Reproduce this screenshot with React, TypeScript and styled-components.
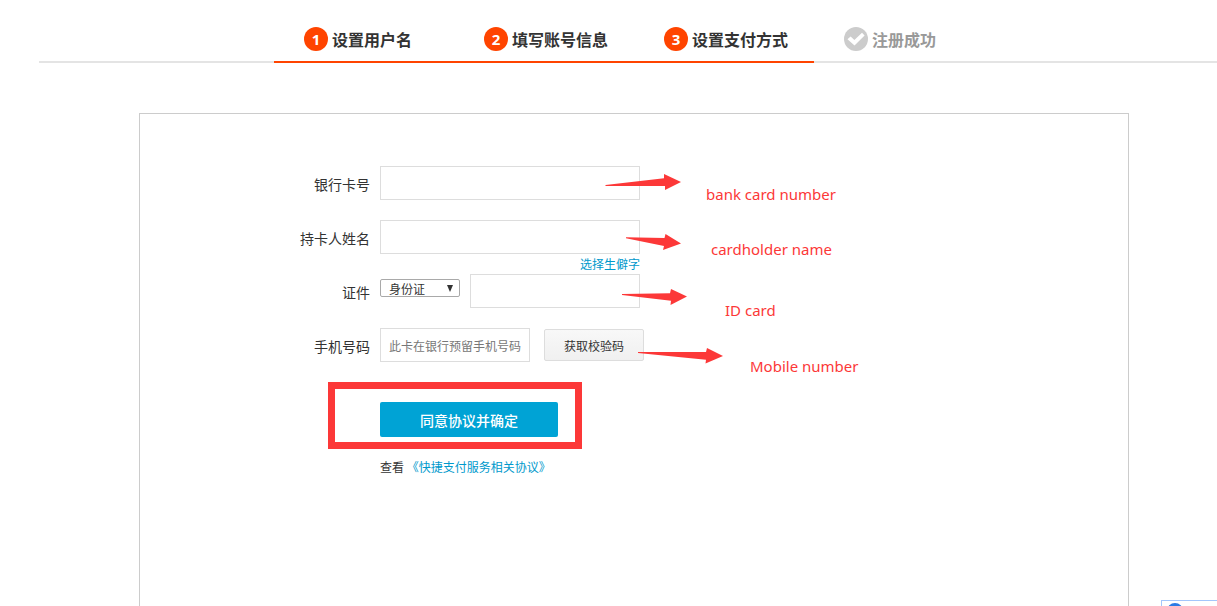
import React from "react";
import styled, { createGlobalStyle } from "styled-components";

const GlobalStyle = createGlobalStyle`
  * { box-sizing: border-box; }
  body {
    margin: 0;
    overflow-x: hidden;
    background: #fff;
    color: #333;
    font: 14px/20px "Noto Sans CJK SC", sans-serif;
  }
  input, select, button { font-family: inherit; color: inherit; margin: 0; }
  a { color: #0099cc; text-decoration: none; }
`;

const Page = styled.div`
  display: flex;
  flex-direction: column;
  min-width: 1190px;
  min-height: 100vh;
  margin-left: 39px;
  margin-right: -12px;
`;

const StepBar = styled.header`
  display: flex;
  justify-content: center;
  background: linear-gradient(#e4e4e4, #e4e4e4) bottom / 100% 2px no-repeat;
`;

const Steps = styled.ol`
  display: flex;
  margin: 0;
  padding: 0;
  list-style: none;
`;

const Step = styled.li<{ $done?: boolean }>`
  display: flex;
  align-items: center;
  gap: 4px;
  width: 180px;
  height: 63px;
  padding: 16px 0 0 30px;
  border-bottom: 2px solid ${(p) => (p.$done ? "#ff4400" : "#e4e4e4")};
  color: ${(p) => (p.$done ? "#333" : "#999")};
  font-size: 16px;
  font-weight: bold;
  line-height: 24px;
`;

const StepNumber = styled.span`
  width: 24px;
  height: 24px;
  border-radius: 50%;
  background: #ff4400;
  color: #fff;
  font: bold 15px/24px "Open Sans", sans-serif;
  text-align: center;
`;

const Panel = styled.main`
  flex: 1;
  width: 990px;
  margin: 50px auto 0;
  padding: 52px 0 40px;
  border: 1px solid #ccc;
  border-bottom: 0;
`;

const Row = styled.div`
  position: relative;
  display: flex;
  gap: 10px;
  height: 34px;
  margin-bottom: 20px;
`;

const Label = styled.label`
  width: 230px;
  padding-top: 8px;
  text-align: right;
`;

const Field = styled.input<{ $width: number }>`
  flex-shrink: 0;
  width: ${(p) => p.$width}px;
  height: 34px;
  padding: 0 8px;
  border: 1px solid #ddd;
  background: #fff;
  font-size: 12px;
  &::placeholder { color: #777; }
`;

const FieldStack = styled.div`
  display: flex;
  flex-direction: column;
  align-items: flex-end;
`;

const HintLink = styled.a`
  font-size: 12px;
  line-height: 20px;
`;

const SelectBox = styled.div`
  position: relative;
  padding-top: 5px;
`;

const Select = styled.select`
  display: block;
  width: 80px;
  height: 18px;
  padding: 0 8px;
  appearance: none;
  border: 1px solid #a9a9a9;
  border-radius: 2px;
  background: #fff;
  font-size: 12px;
  line-height: 18px;
`;

const Caret = styled.svg`
  position: absolute;
  top: 11px;
  right: 7px;
  pointer-events: none;
`;

const PhoneFields = styled.div`
  display: flex;
  align-items: center;
  gap: 14px;
`;

const CodeButton = styled.button`
  width: 100px;
  height: 32px;
  padding: 0;
  border: 1px solid #ddd;
  border-radius: 2px;
  background: linear-gradient(#f8f8f8, #f0f0f0);
  font-size: 12px;
`;

const Actions = styled.div`
  display: flex;
  flex-direction: column;
  align-items: flex-start;
  gap: 20px;
  padding-left: 240px;
`;

const SubmitBox = styled.div`
  position: relative;
`;

const SubmitButton = styled.button`
  display: block;
  width: 178px;
  height: 35px;
  margin-top: 20px;
  padding: 0;
  border: 0;
  border-radius: 2px;
  background: #00a3d5;
  && { color: #fff; }
  font-size: 14px;
  font-weight: 500;
`;

const Highlight = styled.div`
  position: absolute;
  inset: 0 -24px -12px -52px;
  border: 7px solid #fc3838;
  pointer-events: none;
`;

const Agreement = styled.p`
  margin: 0;
  font-size: 12px;
  line-height: 20px;
`;

const Arrow = styled.svg<{ $x: number }>`
  position: absolute;
  top: 0;
  left: ${(p) => p.$x}px;
  fill: #fc3838;
  pointer-events: none;
`;

const Note = styled.span<{ $x: number; $y: number }>`
  position: absolute;
  left: ${(p) => p.$x}px;
  top: ${(p) => p.$y}px;
  color: #fc3838;
  font: 15px/20px "Noto Sans", sans-serif;
  white-space: nowrap;
`;

const Widget = styled.aside`
  position: fixed;
  right: 0;
  bottom: 0;
  width: 56px;
  height: 6px;
  padding: 1px 0 0 4px;
  overflow: hidden;
  border: 1px solid #a3c6fb;
  border-width: 1px 0 0 1px;
  background: #fff;
`;

const WidgetLogo = styled.svg`
  display: block;
`;

export default function App() {
  return (
    <>
      <GlobalStyle />
      <Page>
        <StepBar>
          <Steps>
            <Step $done><StepNumber>1</StepNumber>设置用户名</Step>
            <Step $done><StepNumber>2</StepNumber>填写账号信息</Step>
            <Step $done><StepNumber>3</StepNumber>设置支付方式</Step>
            <Step>
              <svg width="24" height="24" viewBox="0 0 24 24" aria-hidden="true">
                <circle cx="12" cy="12" r="12" fill="#ccc" />
                <path d="M3.5 12.3 6.6 9.5 10.4 13 18 5.8 20.6 8.6 10.5 18.6Z" fill="#fff" />
              </svg>
              注册成功
            </Step>
          </Steps>
        </StepBar>
        <Panel>
          <form onSubmit={(e) => e.preventDefault()}>
            <Row>
              <Label htmlFor="card">银行卡号</Label>
              <Field id="card" $width={260} />
              <Arrow $x={465} width="77" height="34" aria-hidden="true">
                <path d="M0.5 19 59 12.2 59 8 76 16 60 24 60 20 0.5 20Z" />
              </Arrow>
              <Note $x={566} $y={18}>bank card number</Note>
            </Row>
            <Row>
              <Label htmlFor="holder">持卡人姓名</Label>
              <FieldStack>
                <Field id="holder" $width={260} />
                <HintLink href="#rare">选择生僻字</HintLink>
              </FieldStack>
              <Arrow $x={485} width="57" height="34" aria-hidden="true">
                <path d="M1 17.2 39.5 18 40.5 14 56 23.6 38 30 39 26 1 18.2Z" />
              </Arrow>
              <Note $x={571} $y={19}>cardholder name</Note>
            </Row>
            <Row>
              <Label htmlFor="idno">证件</Label>
              <SelectBox>
                <Select aria-label="证件类型">
                  <option>身份证</option>
                </Select>
                <Caret width="6" height="7" aria-hidden="true">
                  <path d="M0 0h6L3 7Z" fill="#333" />
                </Caret>
              </SelectBox>
              <Field id="idno" $width={170} />
              <Arrow $x={481} width="67" height="34" aria-hidden="true">
                <path d="M1 20 49 19.3 50 15 66 22.5 49.5 31 50 26.8 1 21Z" />
              </Arrow>
              <Note $x={585} $y={26}>ID card</Note>
            </Row>
            <Row>
              <Label htmlFor="phone">手机号码</Label>
              <PhoneFields>
                <Field id="phone" $width={150} placeholder="此卡在银行预留手机号码" />
                <CodeButton type="button">获取校验码</CodeButton>
              </PhoneFields>
              <Arrow $x={497} width="87" height="37" aria-hidden="true">
                <path d="M1 24 69 24 70 20 86 28 68.5 35.6 69 31.8 1 25Z" />
              </Arrow>
              <Note $x={610} $y={28}>Mobile number</Note>
            </Row>
            <Actions>
              <SubmitBox>
                <SubmitButton type="submit">同意协议并确定</SubmitButton>
                <Highlight />
              </SubmitBox>
              <Agreement>
                查看 <a href="#agreement">《快捷支付服务相关协议》</a>
              </Agreement>
            </Actions>
          </form>
        </Panel>
      </Page>
      <Widget aria-label="助手">
        <WidgetLogo width="18" height="18" aria-hidden="true">
          <circle cx="9" cy="9" r="8" fill="#2c7be5" />
        </WidgetLogo>
      </Widget>
    </>
  );
}
